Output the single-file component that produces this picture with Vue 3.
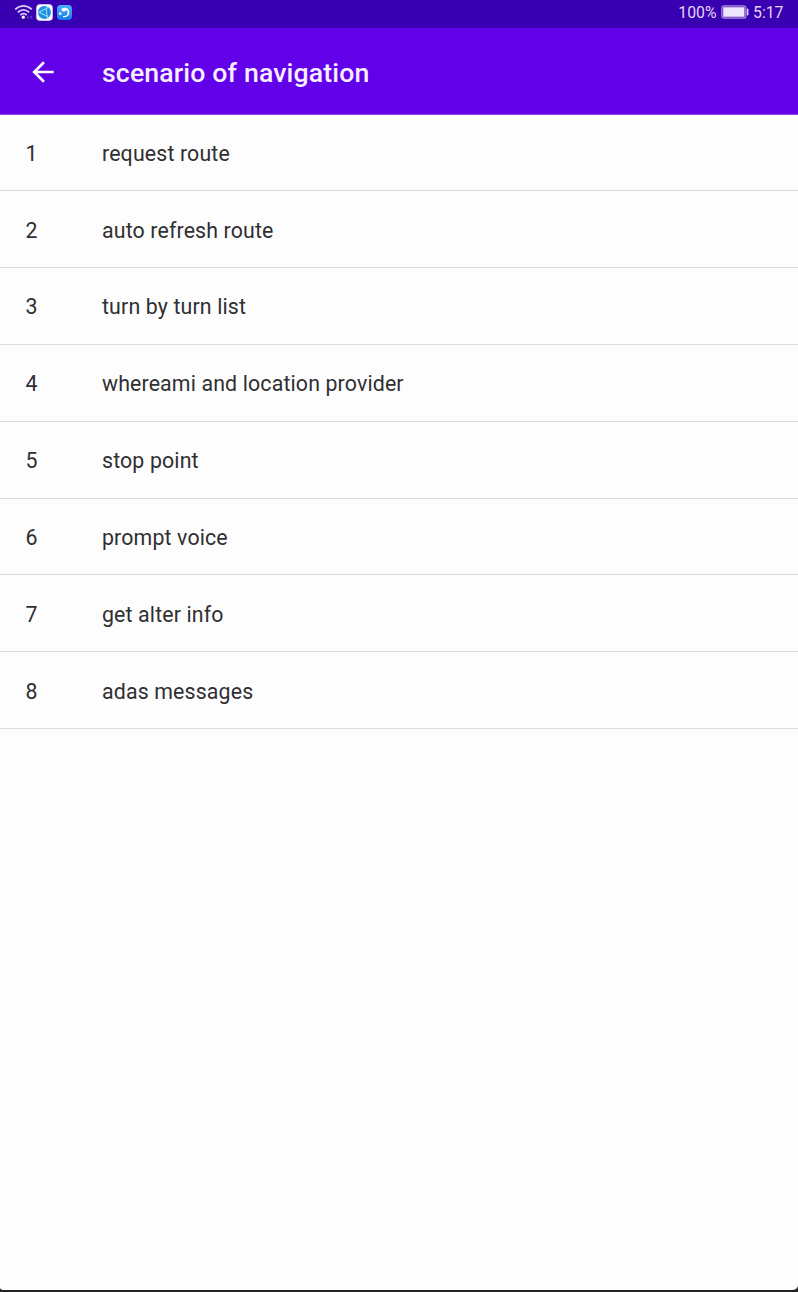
<script setup>
const scenarios = [
  'request route',
  'auto refresh route',
  'turn by turn list',
  'whereami and location provider',
  'stop point',
  'prompt voice',
  'get alter info',
  'adas messages',
]
</script>

<template>
  <div class="screen">
    <div class="status">
      <div class="status-left">
        <svg class="wifi" viewBox="0 0 20 16" width="20" height="16">
          <g fill="none" stroke="#d9caf3" stroke-width="1.8">
            <path d="M1.2 5.4Q9.5-1.6 17.8 5.4" />
            <path d="M3.8 8.3Q9.5 3.4 15.2 8.3" />
            <path d="M6.3 11Q9.5 8.2 12.7 11" />
          </g>
          <circle cx="9.3" cy="13.2" r="1.6" fill="#fff" />
          <path d="M12.6 13.2l2-2v4zM18.4 13.2l-2-2v4z" fill="#6f46c2" />
        </svg>
        <svg class="browser" viewBox="0 0 17 17" width="17" height="17">
          <rect x="0.3" y="0.3" width="16.4" height="16.4" rx="3.8" fill="#fbfcff" />
          <circle cx="8.4" cy="8.4" r="6.5" fill="#1f8fdf" />
          <g fill="none" stroke="#8fd4fa" stroke-width="1.1">
            <path d="M3.2 8.2L10.6 4.2Q9.8 8.4 11.4 12.6Z" />
            <path d="M10.6 4.2L12 3.2M11.4 12.6L11.8 14M3.2 8.2L2 8.8" />
          </g>
        </svg>
        <svg class="assistant" viewBox="0 0 15 15" width="15" height="15">
          <defs>
            <linearGradient id="tile" x1="0" y1="0" x2="0" y2="1">
              <stop offset="0" stop-color="#48b3fb" />
              <stop offset="1" stop-color="#1877ed" />
            </linearGradient>
          </defs>
          <rect width="15" height="15" rx="3.8" fill="url(#tile)" />
          <path d="M5 4.6Q8 2.2 10.6 4.6Q12.6 7.4 10.8 10.1Q9.4 11.8 6.6 11.6" fill="none" stroke="#fff" stroke-width="1.4" stroke-linecap="round" />
          <path d="M4.6 4.4L5.6 6.4Q7.6 6.9 9 5.4L10.8 5.6L9.4 3.6Z" fill="#fff" />
          <circle cx="3.2" cy="8.7" r="1.4" fill="#e7f5ff" />
        </svg>
      </div>
      <div class="status-right">
        <span class="percent">100%</span>
        <svg class="battery" viewBox="0 0 28 14" width="28" height="14">
          <rect x="0.8" y="0.8" width="24" height="12.4" rx="2" fill="#5d2fc0" stroke="#a98be0" stroke-width="1.2" />
          <rect x="2.2" y="2.2" width="21.2" height="9.6" rx="0.6" fill="#eee5fb" />
          <rect x="25.8" y="3.5" width="1.6" height="7" rx="0.7" fill="#e3d6f6" />
        </svg>
        <span>5:17</span>
      </div>
    </div>
    <header class="bar">
      <svg class="back" viewBox="0 0 24 24" width="32" height="32">
        <path d="M20 11H7.83l5.59-5.59L12 4l-8 8 8 8 1.41-1.41L7.83 13H20v-2z" fill="#fff" />
      </svg>
      <h1>scenario of navigation</h1>
    </header>
    <ul class="list">
      <li v-for="(name, i) in scenarios" :key="name">
        <span class="num">{{ i + 1 }}</span>
        <span>{{ name }}</span>
      </li>
    </ul>
    <div class="edge"></div>
  </div>
</template>

<style>
body {
  margin: 0;
  background: #252326;
}
</style>

<style scoped>
.screen {
  box-sizing: border-box;
  width: 798px;
  height: 1292px;
  display: flex;
  flex-direction: column;
  background: #252326;
  font-family: Roboto, "Liberation Sans", sans-serif;
  overflow: hidden;
}
.status {
  flex: none;
  height: 28px;
  background: #3900b1;
  display: flex;
  justify-content: space-between;
}
.status-left {
  display: flex;
  align-items: flex-start;
  padding: 4px 0 0 14px;
}
.browser {
  margin-left: 2px;
}
.assistant {
  margin: 1px 0 0 4px;
}
.status-right {
  display: flex;
  align-items: flex-start;
  padding: 3px 14.5px 0 0;
  color: #e2d6f6;
  font-size: 15.8px;
  line-height: 20px;
}
.battery {
  margin: 2px 4.5px 0 4px;
}
.bar {
  flex: none;
  box-sizing: border-box;
  height: 87px;
  border-bottom: 1px solid #8c45ec;
  background: #6200ea;
  display: flex;
  align-items: center;
}
.back {
  margin: 1px 0 0 26.6px;
}
h1 {
  margin: 4px 0 0 43.4px;
  color: #f6efff;
  font-size: 26.67px;
  font-weight: 500;
  line-height: 32px;
  letter-spacing: 0.14px;
}
.list {
  flex: 1;
  margin: 0;
  padding: 0;
  list-style: none;
  background: #fdfdfd;
  border-radius: 0 0 5px 3px;
}
li {
  box-sizing: border-box;
  height: 76.85px;
  padding-top: 2px;
  display: flex;
  align-items: center;
  border-bottom: 1px solid #dcdcdc;
  color: #302f32;
  font-size: 21.33px;
  letter-spacing: 0.14px;
}
li:first-child {
  height: 76.2px;
}
.num {
  width: 76.5px;
  padding-left: 25.5px;
  box-sizing: content-box;
}
.edge {
  flex: none;
  height: 2px;
}
</style>
